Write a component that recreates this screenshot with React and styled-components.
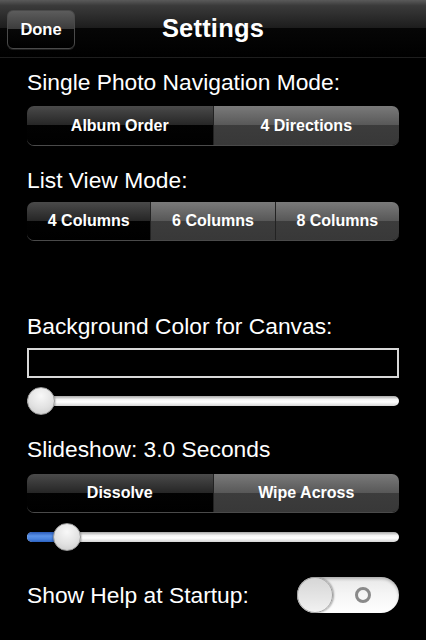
import React from "react";
import styled, { createGlobalStyle } from "styled-components";

const Global = createGlobalStyle`
  html, body { margin: 0; padding: 0; background: #000; }
  body { font-family: "Liberation Sans", Arial, Helvetica, sans-serif; }
`;

const Page = styled.div`
  width: 426px;
  height: 640px;
  background: #000;
  display: flex;
  flex-direction: column;
  overflow: hidden;
`;

const NavBar = styled.div`
  height: 58px;
  box-sizing: border-box;
  border-bottom: 1px solid #1e1e1e;
  background: linear-gradient(to bottom, #5a5a5a 0%, #3a3a3a 10%, #1c1c1c 50%, #060606 50%, #000 100%);
  display: grid;
  grid-template-columns: 1fr auto 1fr;
  align-items: center;
  padding: 0 7px;
`;

const NavButton = styled.div`
  justify-self: start;
  width: 68px;
  height: 39px;
  box-sizing: border-box;
  border-radius: 6px;
  border: 1px solid #4a4a4a;
  background: linear-gradient(to bottom, #5c5c5c 0%, #3c3c3c 48%, #080808 50%, #000 100%);
  color: #fff;
  font-weight: bold;
  font-size: 16.5px;
  display: flex;
  align-items: center;
  justify-content: center;
  margin-top: 1px;
  box-shadow: 0 1px 0 rgba(255,255,255,0.12);
`;

const Title = styled.div`
  color: #fff;
  font-weight: bold;
  font-size: 25.5px;
  letter-spacing: 0.2px;
`;

const Content = styled.div`
  display: flex;
  flex-direction: column;
  padding: 0 27px;
`;

const Label = styled.div`
  color: #fff;
  font-size: 22.8px;
  line-height: 24px;
  margin-top: ${p => p.$mt}px;
`;

const Segmented = styled.div`
  display: flex;
  height: ${p => p.$h}px;
  margin-top: ${p => p.$mt}px;
  border-radius: 7px;
  overflow: hidden;
  box-shadow: 0 1px 0 #4a4a4a;
`;

const Segment = styled.div`
  flex: 1;
  display: flex;
  align-items: center;
  justify-content: center;
  color: #fff;
  font-weight: bold;
  font-size: 16px;
  border-left: ${p => (p.$first ? "none" : "1px solid #222")};
  background: ${p =>
    p.$selected
      ? "linear-gradient(to bottom, #4a4a4a 0%, #262626 49%, #020202 50%, #000 100%)"
      : "linear-gradient(to bottom, #7a7a7a 0%, #585858 49%, #3c3c3c 50%, #383838 100%)"};
`;

const ColorBox = styled.div`
  margin-top: 10px;
  height: 30px;
  box-sizing: border-box;
  border: 2px solid #d8d8d8;
  background: #000;
`;

const SliderWrap = styled.div`
  position: relative;
  height: 28px;
  margin-top: ${p => p.$mt}px;
  display: flex;
  align-items: center;
`;

const Track = styled.div`
  flex: 1;
  height: 10px;
  border-radius: 5px;
  background: linear-gradient(to bottom, #a8a8a8 0%, #f4f4f4 35%, #ffffff 60%, #d4d4d4 100%);
  position: relative;
  overflow: hidden;
`;

const Fill = styled.div`
  position: absolute;
  left: 0;
  top: 0;
  bottom: 0;
  background: linear-gradient(to bottom, #2a5ab8 0%, #5b93ea 40%, #4a84e0 70%, #2c62c0 100%);
`;

const Thumb = styled.div`
  position: absolute;
  top: 0;
  width: 28px;
  height: 28px;
  border-radius: 50%;
  box-sizing: border-box;
  border: 1px solid #9a9a9a;
  background: radial-gradient(circle at 50% 30%, #f8f8f8 0%, #e2e2e2 55%, #c8c8c8 100%);
  box-shadow: 0 1px 2px rgba(0,0,0,0.6);
`;

const SwitchRow = styled.div`
  display: flex;
  align-items: center;
  justify-content: space-between;
  margin-top: 26px;
`;

const RowLabel = styled.div`
  color: #fff;
  font-size: 22.8px;
  line-height: 24px;
`;

const Switch = styled.div`
  position: relative;
  width: 102px;
  height: 36px;
  border-radius: 18px;
  box-sizing: border-box;
  background: linear-gradient(to bottom, #e8e8e8 0%, #f6f6f6 50%, #ffffff 100%);
  box-shadow: inset 0 2px 3px rgba(0,0,0,0.25);
  display: flex;
  align-items: center;
  justify-content: flex-end;
  padding-right: 28px;
`;

const Knob = styled.div`
  position: absolute;
  left: 0;
  top: 0;
  width: 36px;
  height: 36px;
  border-radius: 50%;
  box-sizing: border-box;
  border: 1px solid #a0a0a0;
  background: linear-gradient(to bottom, #d6d6d6 0%, #e6e6e6 60%, #f2f2f2 100%);
  box-shadow: 1px 0 2px rgba(0,0,0,0.35);
`;

const Ring = styled.div`
  width: 16px;
  height: 16px;
  border-radius: 50%;
  box-sizing: border-box;
  border: 3px solid #8a8a8a;
`;

function Slider({ value, mt }) {
  const trackW = 372;
  const thumbLeft = Math.round(value * (trackW - 28));
  return (
    <SliderWrap $mt={mt}>
      <Track>
        {value > 0 && <Fill style={{ width: thumbLeft + 14 }} />}
      </Track>
      <Thumb style={{ left: thumbLeft }} />
    </SliderWrap>
  );
}

export default function App() {
  return (
    <Page>
      <Global />
      <NavBar>
        <NavButton>Done</NavButton>
        <Title>Settings</Title>
        <div />
      </NavBar>
      <Content>
        <Label $mt={12}>Single Photo Navigation Mode:</Label>
        <Segmented $mt={12} $h={39}>
          <Segment $first $selected>Album Order</Segment>
          <Segment>4 Directions</Segment>
        </Segmented>

        <Label $mt={23}>List View Mode:</Label>
        <Segmented $mt={10} $h={38}>
          <Segment $first $selected>4 Columns</Segment>
          <Segment>6 Columns</Segment>
          <Segment>8 Columns</Segment>
        </Segmented>

        <Label $mt={74}>Background Color for Canvas:</Label>
        <ColorBox />
        <Slider value={0} mt={9} />

        <Label $mt={22}>Slideshow: 3.0 Seconds</Label>
        <Segmented $mt={13} $h={38}>
          <Segment $first $selected>Dissolve</Segment>
          <Segment>Wipe Across</Segment>
        </Segmented>
        <Slider value={0.076} mt={11} />

        <SwitchRow>
          <RowLabel>Show Help at Startup:</RowLabel>
          <Switch>
            <Knob />
            <Ring />
          </Switch>
        </SwitchRow>
      </Content>
    </Page>
  );
}
